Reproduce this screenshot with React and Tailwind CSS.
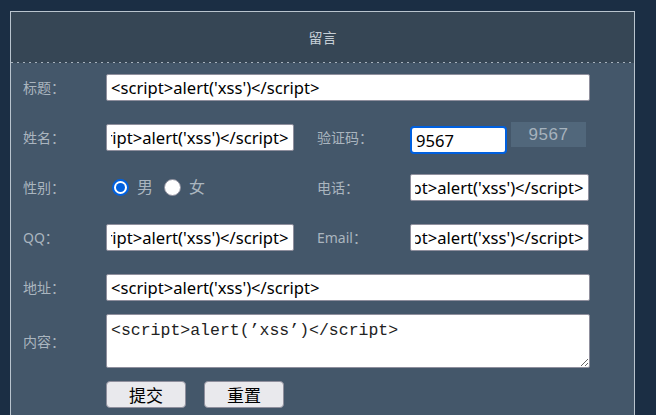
import React, { useEffect, useRef } from "react";

const XSS = "<script>alert('xss')</script>";

function EndInput({ className }) {
  const ref = useRef(null);
  useEffect(() => {
    if (ref.current) ref.current.scrollLeft = ref.current.scrollWidth;
  }, []);
  return (
    <input
      ref={ref}
      readOnly
      defaultValue={XSS}
      className={
        "h-[27px] bg-white border border-[#8f8f9d] rounded-[2px] px-[4px] text-[16.6px] text-black outline-none font-['Noto_Sans',sans-serif] " +
        className
      }
    />
  );
}

function Label({ children, w }) {
  return (
    <span className={"shrink-0 text-[14px] text-[#aab5bf] " + w}>{children}</span>
  );
}

export default function App() {
  return (
    <div className="min-h-screen bg-[#1b2e44] pt-[11px] pl-[10px] font-['Noto_Sans','Noto_Sans_CJK_SC',sans-serif]">
      <div className="w-[625px] h-[404px] border border-b-0 border-[#b9c4ce] bg-[#44576a] flex flex-col">
        <div className="h-[50px] bg-[#364655] flex items-center justify-center text-[14px] text-[#c5ced6]">
          留言
        </div>
        <div className="h-px bg-[#364655] bg-[repeating-linear-gradient(90deg,#a7b2bc_0_2px,transparent_2px_6px)]" />
        <div className="flex flex-col pl-[12px]">
          <div className="h-[49px] flex items-center">
            <Label w="w-[83px]">标题：</Label>
            <EndInput className="w-[484px]" />
          </div>
          <div className="h-[50px] flex items-center">
            <Label w="w-[83px]">姓名：</Label>
            <EndInput className="w-[188px]" />
            <span className="w-[23px]" />
            <Label w="w-[93px]">验证码：</Label>
            <input
              readOnly
              defaultValue="9567"
              className="mt-[6px] w-[97px] h-[28px] bg-white border-2 border-[#0060df] rounded-[4px] px-[4px] text-[16.6px] text-black outline-none font-['Noto_Sans',sans-serif]"
            />
            <div className="ml-[4px] mb-[5px] w-[75px] h-[25px] bg-[#51677b] flex items-center justify-center text-[17px] tracking-[0.5px] text-[#a6b2bd] font-['Liberation_Sans',sans-serif]">
              9567
            </div>
          </div>
          <div className="h-[50px] flex items-center">
            <Label w="w-[83px]">性别：</Label>
            <div className="w-[188px] flex items-center text-[16px] text-[#aab5bf]">
              <span className="ml-[6px] w-[17px] h-[17px] rounded-full border-[2px] border-[#0060df] bg-white flex items-center justify-center">
                <span className="w-[9px] h-[9px] rounded-full bg-[#0060df]" />
              </span>
              <span className="ml-[8px]">男</span>
              <span className="ml-[11px] w-[17px] h-[17px] rounded-full border border-[#8f8f9d] bg-white" />
              <span className="ml-[8px]">女</span>
            </div>
            <span className="w-[23px]" />
            <Label w="w-[93px]">电话：</Label>
            <EndInput className="w-[179px]" />
          </div>
          <div className="h-[50px] flex items-center">
            <Label w="w-[83px]">QQ：</Label>
            <EndInput className="w-[188px]" />
            <span className="w-[23px]" />
            <Label w="w-[93px]">Email：</Label>
            <EndInput className="w-[179px]" />
          </div>
          <div className="h-[50px] flex items-center">
            <Label w="w-[83px]">地址：</Label>
            <EndInput className="w-[484px]" />
          </div>
          <div className="mt-[2px] flex items-center">
            <Label w="w-[83px]">内容：</Label>
            <textarea
              readOnly
              defaultValue={"<script>alert(’xss’)</script>"}
              className="w-[484px] h-[54px] bg-white border border-[#8f8f9d] rounded-[2px] px-[4px] pt-[5px] text-[16.5px] leading-[22px] text-[#222] outline-none resize font-['Liberation_Mono',monospace]"
            />
          </div>
          <div className="mt-[13px] flex items-center pl-[83px] gap-[18px]">
            <button className="w-[80px] h-[27px] bg-[#e9e9ed] border border-[#8f8f9d] rounded-[4px] text-[17px] text-black font-['Noto_Sans_CJK_SC',sans-serif] leading-none">
              提交
            </button>
            <button className="w-[80px] h-[27px] bg-[#e9e9ed] border border-[#8f8f9d] rounded-[4px] text-[17px] text-black font-['Noto_Sans_CJK_SC',sans-serif] leading-none">
              重置
            </button>
          </div>
        </div>
      </div>
    </div>
  );
}
